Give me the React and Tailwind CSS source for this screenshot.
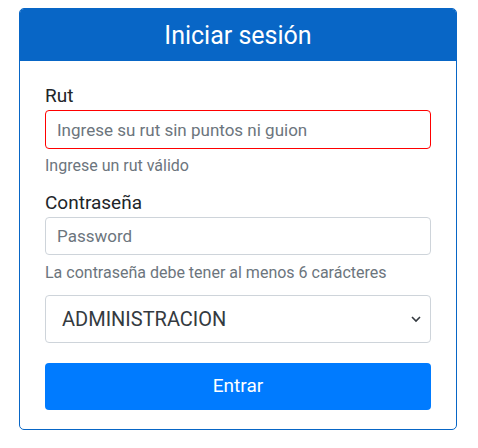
import { useState } from 'react';

export default function App() {
  const [rut, setRut] = useState("");
  const [password, setPassword] = useState("");
  const [area, setArea] = useState("ADMINISTRACION");

  return (
    <div className="min-h-screen bg-white pt-[8px] font-['Roboto',sans-serif]">
      <div className="mx-[19px] w-[438px] border border-[#0866c6] rounded-[5px] overflow-hidden">
        <div className="h-[52px] bg-[#0866c6] flex items-center justify-center">
          <h1 className="text-white text-[25px] leading-none">Iniciar sesión</h1>
        </div>

        <form className="px-[25px] pt-[21px] pb-[19px]" onSubmit={(e) => e.preventDefault()}>
          {/* Rut */}
          <label className="block text-[19px] leading-[28px] text-[#212529]">Rut</label>
          <input
            type="text"
            value={rut}
            onChange={(e) => setRut(e.target.value)}
            placeholder="Ingrese su rut sin puntos ni guion"
            className="block w-full h-[39px] px-[11px] border border-[#ff0000] rounded-[4px] text-[17px] text-[#495057] placeholder:text-[#6c757d] outline-none"
          />
          <p className="mt-[5px] text-[16px] leading-[24px] text-[#6c757d]">Ingrese un rut válido</p>

          {/* Contraseña */}
          <label className="block mt-[11px] text-[19px] leading-[28px] text-[#212529]">Contraseña</label>
          <input
            type="password"
            value={password}
            onChange={(e) => setPassword(e.target.value)}
            placeholder="Password"
            className="block w-full h-[38px] px-[11px] border border-[#ced4da] rounded-[4px] text-[17px] text-[#495057] placeholder:text-[#6c757d] outline-none"
          />
          <p className="mt-[6px] text-[16px] leading-[24px] text-[#6c757d]">La contraseña debe tener al menos 6 carácteres</p>

          {/* Area */}
          <div className="relative mt-[10px]">
            <select
              value={area}
              onChange={(e) => setArea(e.target.value)}
              className="block w-full h-[48px] pl-[16px] pr-[40px] appearance-none border border-[#ced4da] rounded-[4px] bg-white text-[20px] text-[#343a40] outline-none"
            >
              <option>ADMINISTRACION</option>
              <option>DOCENTE</option>
              <option>ALUMNO</option>
            </select>
            <svg
              className="absolute right-[10px] top-1/2 -translate-y-1/2 pointer-events-none"
              width="10"
              height="8"
              viewBox="0 0 10 8"
              fill="none"
            >
              <path d="M1 2l4 4 4-4" stroke="#343a40" strokeWidth="1.6" />
            </svg>
          </div>

          {/* Submit */}
          <button
            type="submit"
            className="mt-[20px] w-full h-[47px] bg-[#007bff] hover:bg-[#0069d9] text-white text-[19px] rounded-[4px]"
          >
            Entrar
          </button>
        </form>
      </div>
    </div>
  );
}
